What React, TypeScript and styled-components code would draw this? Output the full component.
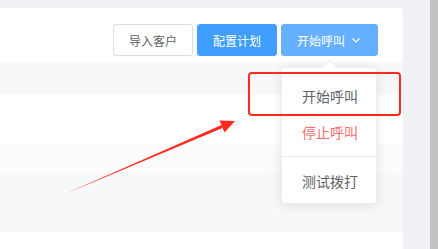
import React from "react";
import styled, { createGlobalStyle } from "styled-components";

const Global = createGlobalStyle`
  html, body { margin: 0; padding: 0; }
  body { font-family: "Noto Sans CJK SC", "Noto Sans", sans-serif; background: #eff1f4; }
`;

const Page = styled.div`
  position: relative;
  display: flex;
  width: 438px;
  height: 249px;
  overflow: hidden;
  background: #eff1f4;
`;

const Main = styled.div`
  flex: 1;
  display: flex;
  flex-direction: column;
  padding-top: 8px;
  padding-right: 27px;
`;

const Card = styled.div`
  flex: 1;
  background: #ffffff;
  border-top-right-radius: 4px;
  padding-top: 16px;
  display: flex;
  flex-direction: column;
`;

const Toolbar = styled.div`
  display: flex;
  justify-content: flex-end;
  gap: 4px;
  padding-right: 25px;
`;

const Button = styled.button<{ $kind: "default" | "primary" | "hover" }>`
  box-sizing: border-box;
  height: 32px;
  padding: 0 15px;
  display: inline-flex;
  align-items: center;
  gap: 5px;
  font-family: "Noto Sans CJK SC", sans-serif;
  font-size: 12px;
  border-radius: 3px;
  border: 1px solid
    ${(p) => (p.$kind === "default" ? "#dcdfe6" : p.$kind === "primary" ? "#409eff" : "#66b1ff")};
  background: ${(p) => (p.$kind === "default" ? "#ffffff" : p.$kind === "primary" ? "#409eff" : "#66b1ff")};
  color: ${(p) => (p.$kind === "default" ? "#606266" : "#ffffff")};
`;

const DropWrap = styled.div`
  position: relative;
  display: flex;
`;

const Menu = styled.ul`
  position: absolute;
  top: 43px;
  left: 0;
  margin: 0;
  padding: 10px 0;
  list-style: none;
  background: #ffffff;
  border: 1px solid #ebeef5;
  border-radius: 4px;
  box-shadow: 0 2px 12px 0 rgba(0, 0, 0, 0.1);
  box-sizing: border-box;
  width: 96px;
  z-index: 5;
  &::before {
    content: "";
    position: absolute;
    top: -6px;
    left: 42px;
    width: 10px;
    height: 10px;
    background: #ffffff;
    border-left: 1px solid #ebeef5;
    border-top: 1px solid #ebeef5;
    transform: rotate(45deg);
  }
`;

const Item = styled.li<{ $danger?: boolean; $divided?: boolean }>`
  position: relative;
  height: 36px;
  line-height: 36px;
  padding: 0 20px;
  white-space: nowrap;
  font-size: 14px;
  color: ${(p) => (p.$danger ? "#f56c6c" : "#606266")};
  ${(p) =>
    p.$divided
      ? `margin-top: 6px; border-top: 1px solid #ebeef5; &::before { content: ""; display: block; height: 6px; }`
      : ""}
`;

const Table = styled.div`
  margin-top: 6px;
  display: flex;
  flex-direction: column;
`;

const Row = styled.div<{ $h: number; $bg: string }>`
  height: ${(p) => p.$h}px;
  background: ${(p) => p.$bg};
`;

const Scrollbar = styled.div`
  width: 8px;
  background: #c1c1c1;
`;

const Highlight = styled.div`
  position: absolute;
  left: 248px;
  top: 72px;
  width: 153px;
  height: 44px;
  box-sizing: border-box;
  border: 2px solid #ff2a1f;
  border-radius: 4px;
  z-index: 10;
`;

const ArrowLayer = styled.svg`
  position: absolute;
  left: 0;
  top: 0;
  z-index: 10;
  pointer-events: none;
`;

const Chevron = () => (
  <svg width="12" height="10" viewBox="0 0 12 10">
    <polyline points="2.5,3.5 6,7 9.5,3.5" fill="none" stroke="#ffffff" strokeWidth="1.1" />
  </svg>
);

export default function App() {
  return (
    <Page>
      <Global />
      <Main>
        <Card>
          <Toolbar>
            <Button $kind="default">导入客户</Button>
            <Button $kind="primary">配置计划</Button>
            <DropWrap>
              <Button $kind="hover">
                开始呼叫
                <Chevron />
              </Button>
              <Menu>
                <Item>开始呼叫</Item>
                <Item $danger>停止呼叫</Item>
                <Item $divided>测试拨打</Item>
              </Menu>
            </DropWrap>
          </Toolbar>
          <Table>
            <Row $h={33} $bg="#f7f8fa" />
            <Row $h={50} $bg="#ffffff" />
            <Row $h={28} $bg="#fbfbfc" />
            <Row $h={59} $bg="#f7f8fa" />
          </Table>
        </Card>
      </Main>
      <Scrollbar />
      <Highlight />
      <ArrowLayer width="438" height="249" viewBox="0 0 438 249">
        <polygon points="65,194 221.5,125 222.5,128" fill="#ff2a1f" />
        <polygon points="235,121 219.5,120.5 224.5,132.5" fill="#ff2a1f" />
      </ArrowLayer>
    </Page>
  );
}
